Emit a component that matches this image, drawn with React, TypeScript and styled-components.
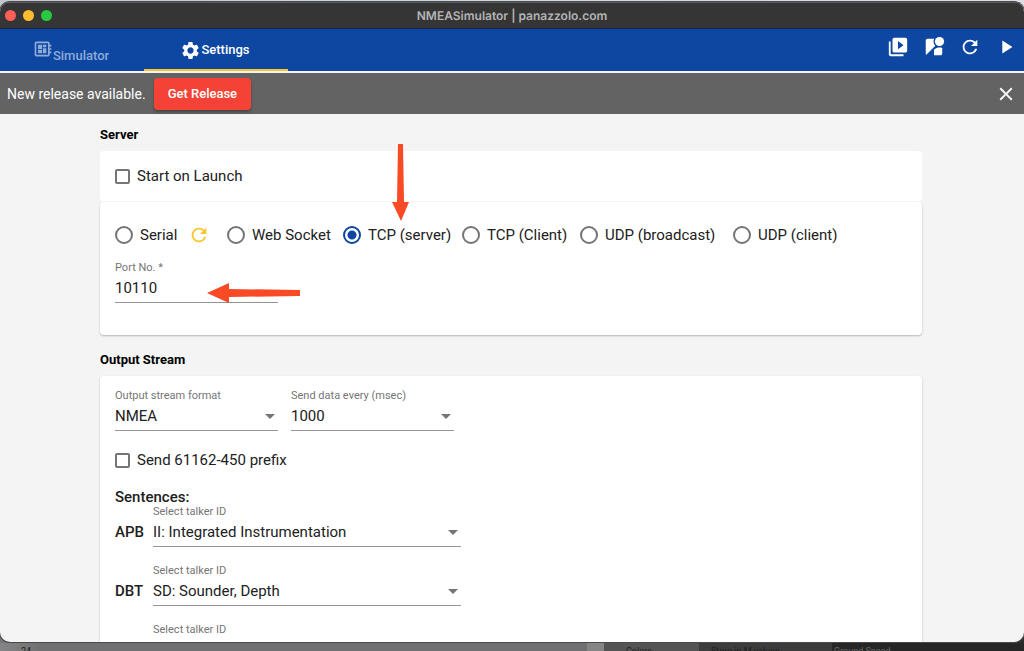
import React, { useState } from "react";
import styled, { createGlobalStyle } from "styled-components";
import {
  MdClose,
  MdDeveloperBoard,
  MdPlayArrow,
  MdRefresh,
  MdSettings,
  MdStreetview,
  MdVideoLibrary,
} from "react-icons/md";

const blue = "#0d47a1";
const yellow = "#fbc52d";
const ink = "#212121";
const muted = "#757575";

const GlobalStyle = createGlobalStyle`
  * { box-sizing: border-box; }
  body {
    margin: 0;
    font-family: Roboto, "Liberation Sans", sans-serif;
    color: ${ink};
  }
  button, input, select { font-family: inherit; color: inherit; }
`;

const Desktop = styled.div`
  display: flex;
  flex-direction: column;
  height: 100vh;
  padding-top: 2px;
  background: linear-gradient(90deg, #c3c7cf, #cdd5e3 40%, #dcdee4) top / 100% 16px no-repeat,
    linear-gradient(90deg, #757577 0, #757577 60%, #2c2c2c 90%);
`;

const Window = styled.div`
  position: relative;
  display: flex;
  flex-direction: column;
  flex: 1;
  min-height: 0;
  overflow: hidden;
  border-radius: 10px;
  background: #f4f4f4;
  box-shadow: 0 0 0 1px #4a4a4a;
`;

const TitleBar = styled.header`
  display: grid;
  grid-template-columns: 1fr auto 1fr;
  align-items: center;
  flex: none;
  height: 27px;
  padding: 0 5px;
  background: #353535;
  border-top: 1px solid #5c5c5c;
  border-bottom: 1px solid #16244a;
`;

const Lights = styled.div`
  display: flex;
  gap: 7px;
`;

const Light = styled.span<{ $color: string }>`
  width: 11px;
  height: 11px;
  border-radius: 50%;
  background: ${(p) => p.$color};
`;

const Title = styled.h1`
  margin: 0;
  color: #b4b4b4;
  font: 600 12px/16px Inter, sans-serif;
  text-rendering: geometricPrecision;
`;

const Nav = styled.nav`
  display: flex;
  justify-content: space-between;
  flex: none;
  height: 44px;
  background: ${blue};
  border-bottom: 2px solid #f4f4f4;
`;

const Tabs = styled.div`
  display: flex;
`;

const Tab = styled.button<{ $active?: boolean }>`
  display: flex;
  align-items: ${(p) => (p.$active ? "center" : "flex-end")};
  justify-content: center;
  width: 144px;
  padding: ${(p) => (p.$active ? "2px 2px 0 0" : "0 2px 3px 0")};
  border: 0;
  border-bottom: 2px solid ${(p) => (p.$active ? yellow : "transparent")};
  background: none;
  color: ${(p) => (p.$active ? "#fff" : "#8fabd8")};
  font-size: 13px;
  font-weight: 500;
  line-height: 20px;

  svg {
    align-self: ${(p) => (p.$active ? "center" : "flex-start")};
    margin-top: ${(p) => (p.$active ? 0 : 10)}px;
  }
`;

const Actions = styled.div`
  display: flex;
  align-items: center;
  gap: 14px;
  padding: 0 7px 6px 0;
`;

const IconButton = styled.button<{ $color?: string }>`
  display: flex;
  padding: 0;
  border: 0;
  background: none;
  color: ${(p) => p.$color ?? "#fff"};
`;

const Banner = styled.div`
  display: flex;
  align-items: center;
  gap: 8px;
  flex: none;
  height: 41px;
  padding: 0 7px;
  background: #636363;
  color: #fff;
  font-size: 14px;
  line-height: 20px;

  ${IconButton} { margin-left: auto; }
`;

const ReleaseButton = styled.button`
  height: 32px;
  padding: 0 14px;
  border: 0;
  border-radius: 4px;
  background: #f44336;
  color: #fff;
  font-size: 13px;
  font-weight: 500;
  box-shadow: 0 2px 3px rgba(0, 0, 0, 0.3);
`;

const Content = styled.main`
  flex: 1;
  min-height: 0;
  overflow-y: auto;
  scrollbar-width: none;
  padding: 13px 102px 13px 100px;
`;

const SectionTitle = styled.h2`
  margin: 0 0 8px;
  color: #000;
  font-size: 13px;
  font-weight: 700;
  line-height: 16px;

  * + & { margin-top: 17px; }
`;

const Card = styled.section`
  padding: 15px;
  border-radius: 4px;
  background: #fff;
  box-shadow: 0 1px 2px rgba(0, 0, 0, 0.26);
`;

const LaunchCard = styled(Card)`
  border-bottom: 1px solid #f7f7f7;
  box-shadow: none;
`;

const ServerCard = styled(Card)`
  padding: 22px 15px 32px;
`;

const Choice = styled.label`
  display: flex;
  align-items: center;
  gap: 7px;
  font-size: 15px;
  line-height: 20px;
`;

const Checkbox = styled.input`
  appearance: none;
  width: 15px;
  height: 15px;
  margin: 0;
  border: 2px solid ${muted};
  border-radius: 2px;

  &:checked { background: ${blue}; border-color: ${blue}; }
`;

const Radio = styled.input`
  appearance: none;
  width: 18px;
  height: 18px;
  margin: 0;
  border: 2px solid ${muted};
  border-radius: 50%;

  &:checked {
    border-color: ${blue};
    background: radial-gradient(circle, ${blue} 4px, transparent 5px);
  }
`;

const RadioRow = styled.div`
  display: grid;
  grid-template-columns: 112px 116px 119px 118px 153px auto;
  align-items: center;
  margin-bottom: 16px;
`;

const SerialGroup = styled.div`
  display: flex;
  align-items: center;
  gap: 11px;
`;

const Field = styled.div<{ $width: number }>`
  width: ${(p) => p.$width}px;
`;

const FieldLabel = styled.label`
  display: block;
  color: ${muted};
  font-size: 11px;
  line-height: 12px;
`;

const Control = styled.div`
  display: flex;
  align-items: center;
  height: 29px;
  border-bottom: 1px solid #949494;
`;

const TextInput = styled.input`
  width: 100%;
  padding: 0;
  border: 0;
  outline: 0;
  background: none;
  font-size: 15px;
  line-height: 20px;
`;

const Select = styled.select`
  appearance: none;
  width: 100%;
  padding: 0 20px 0 0;
  border: 0;
  outline: 0;
  background: none;
  font-size: 15px;
  line-height: 20px;
`;

const Caret = styled.svg`
  flex: none;
  width: 10px;
  height: 5px;
  margin: 0 3px 0 -13px;
  fill: ${muted};
  pointer-events: none;
`;

const FieldRow = styled.div`
  display: flex;
  gap: 13px;
  margin-bottom: 19px;
`;

const OutputCard = styled(Card)`
  padding: 14px 15px;
`;

const Subheading = styled.h3`
  margin: 18px 0 0;
  font-size: 15px;
  font-weight: 500;
  line-height: 18px;
`;

const Sentence = styled.div`
  display: grid;
  grid-template-columns: 38px auto;
  align-items: end;
  margin-bottom: 18px;
`;

const SentenceName = styled.span`
  font-size: 15px;
  font-weight: 500;
  line-height: 29px;
`;

const Arrow = styled.svg<{ $left: number; $top: number }>`
  position: absolute;
  left: ${(p) => p.$left}px;
  top: ${(p) => p.$top}px;
  fill: #f74a25;
  pointer-events: none;
`;

const Behind = styled.footer`
  display: flex;
  flex: none;
  height: 8px;
  margin-top: 1px;
  overflow: hidden;
  font-size: 9px;
  line-height: 16px;
`;

const BehindPane = styled.div<{ $width?: number; $bg: string; $color?: string; $pad: number }>`
  flex: ${(p) => (p.$width ? `0 0 ${p.$width}px` : 1)};
  padding-left: ${(p) => p.$pad}px;
  background: ${(p) => p.$bg};
  color: ${(p) => p.$color ?? "#1c1c1c"};
`;

const modes = ["Web Socket", "TCP (server)", "TCP (Client)", "UDP (broadcast)", "UDP (client)"];

const sentences = [
  ["APB", "II: Integrated Instrumentation"],
  ["DBT", "SD: Sounder, Depth"],
  ["DPT", "SD: Sounder, Depth"],
];

function SelectField({ id, label, value, width }: { id: string; label: string; value: string; width: number }) {
  return (
    <Field $width={width}>
      <FieldLabel htmlFor={id}>{label}</FieldLabel>
      <Control>
        <Select id={id} defaultValue={value}>
          <option>{value}</option>
        </Select>
        <Caret viewBox="0 0 10 5" aria-hidden="true">
          <path d="M0 0h10L5 5z" />
        </Caret>
      </Control>
    </Field>
  );
}

export default function App() {
  const [mode, setMode] = useState("TCP (server)");
  const radio = (name: string) => (
    <Choice key={name}>
      <Radio type="radio" name="mode" checked={mode === name} onChange={() => setMode(name)} />
      {name}
    </Choice>
  );

  return (
    <Desktop>
      <GlobalStyle />
      <Window>
        <TitleBar>
          <Lights>
            <Light $color="#ff5f57" />
            <Light $color="#febc2e" />
            <Light $color="#28c840" />
          </Lights>
          <Title>NMEASimulator | panazzolo.com</Title>
        </TitleBar>
        <Nav>
          <Tabs>
            <Tab><MdDeveloperBoard size={20} />Simulator</Tab>
            <Tab $active><MdSettings size={21} />Settings</Tab>
          </Tabs>
          <Actions>
            <IconButton aria-label="Open file"><MdVideoLibrary size={22} /></IconButton>
            <IconButton aria-label="Map"><MdStreetview size={22} /></IconButton>
            <IconButton aria-label="Refresh"><MdRefresh size={22} /></IconButton>
            <IconButton aria-label="Play"><MdPlayArrow size={22} /></IconButton>
          </Actions>
        </Nav>
        <Banner>
          New release available.
          <ReleaseButton>Get Release</ReleaseButton>
          <IconButton aria-label="Close"><MdClose size={22} /></IconButton>
        </Banner>
        <Content>
          <SectionTitle>Server</SectionTitle>
          <LaunchCard>
            <Choice><Checkbox type="checkbox" />Start on Launch</Choice>
          </LaunchCard>
          <ServerCard>
            <RadioRow>
              <SerialGroup>
                {radio("Serial")}
                <IconButton $color={yellow} aria-label="Rescan serial ports"><MdRefresh size={22} /></IconButton>
              </SerialGroup>
              {modes.map(radio)}
            </RadioRow>
            <Field $width={163}>
              <FieldLabel htmlFor="port">Port No. *</FieldLabel>
              <Control><TextInput id="port" defaultValue="10110" /></Control>
            </Field>
          </ServerCard>
          <SectionTitle>Output Stream</SectionTitle>
          <OutputCard>
            <FieldRow>
              <SelectField id="format" label="Output stream format" value="NMEA" width={163} />
              <SelectField id="interval" label="Send data every (msec)" value="1000" width={163} />
            </FieldRow>
            <Choice><Checkbox type="checkbox" />Send 61162-450 prefix</Choice>
            <Subheading>Sentences:</Subheading>
            {sentences.map(([name, talker]) => (
              <Sentence key={name}>
                <SentenceName>{name}</SentenceName>
                <SelectField id={name} label="Select talker ID" value={talker} width={308} />
              </Sentence>
            ))}
          </OutputCard>
        </Content>
        <Arrow $left={392} $top={141} width="18" height="78" viewBox="0 0 18 78" aria-hidden="true">
          <path d="M6 1h5l1 58h5L9 78 0 59h5z" />
        </Arrow>
        <Arrow $left={207} $top={281} width="94" height="20" viewBox="0 0 94 20" aria-hidden="true">
          <path d="M0 10 22 0v6l71 1v6l-71 1v6z" />
        </Arrow>
      </Window>
      <Behind aria-hidden="true">
        <BehindPane $width={587} $bg="linear-gradient(90deg, #858587, #707072 40px)" $pad={21}>24</BehindPane>
        <BehindPane $width={17} $bg="#858585" $pad={0} />
        <BehindPane $width={95} $bg="#545454" $pad={22}>Colors</BehindPane>
        <BehindPane $width={133} $bg="#3c3c3c" $pad={12}>Store in M values</BehindPane>
        <BehindPane $bg="#262626" $color="#666" $pad={2}>Ground Speed</BehindPane>
      </Behind>
    </Desktop>
  );
}
